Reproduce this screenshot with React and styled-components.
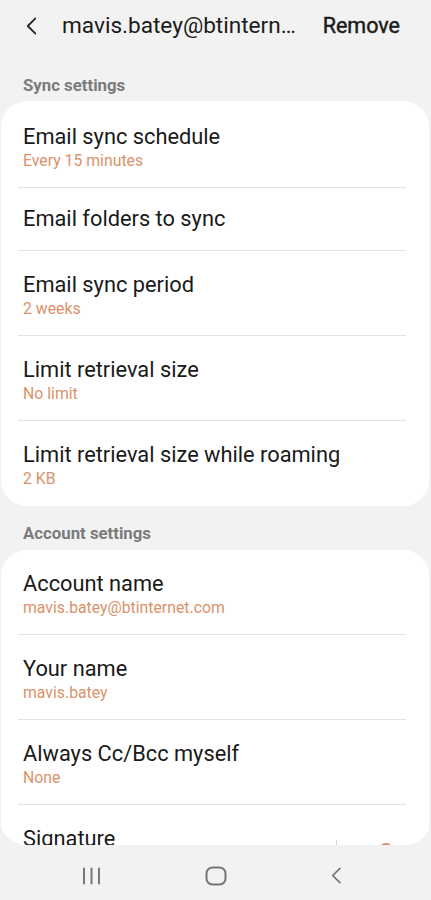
import React from "react";
import styled, { createGlobalStyle } from "styled-components";

const GlobalStyle = createGlobalStyle`
  html, body {
    margin: 0;
    padding: 0;
    background: #f2f2f2;
  }
  body {
    font-family: Roboto, "Noto Sans", "Liberation Sans", sans-serif;
    -webkit-font-smoothing: antialiased;
  }
  * { box-sizing: border-box; }
`;

const Screen = styled.div`
  width: 431px;
  height: 900px;
  display: flex;
  flex-direction: column;
  background: #f2f2f2;
  overflow: hidden;
`;

const Header = styled.header`
  height: 51px;
  flex: none;
  display: flex;
  align-items: center;
  padding: 0 31px 0 25px;
  color: #1b1b1b;
`;

const BackButton = styled.button`
  border: 0;
  background: none;
  padding: 0;
  width: 12px;
  height: 20px;
  display: flex;
  align-items: center;
  justify-content: center;
  color: #222;
  margin-right: 25px;
`;

const Title = styled.h1`
  flex: 1;
  margin: 0;
  font-size: 22.6px;
  font-weight: 400;
  line-height: 26px;
  white-space: nowrap;
  overflow: hidden;
`;

const Action = styled.span`
  font-size: 21.5px;
  font-weight: 400;
  line-height: 26px;
  color: #1b1b1b;
  -webkit-text-stroke: 0.45px #1b1b1b;
`;

const Scroller = styled.main`
  flex: 1;
  overflow: hidden;
  border-radius: 0 0 26px 26px;
`;

const SectionLabel = styled.div`
  padding: ${(p) => (p.$first ? "24px 23px 6px" : "17px 23px 7px")};
  font-size: 16.8px;
  line-height: 20px;
  font-weight: 700;
  color: #7b7b7b;
`;

const Card = styled.section`
  background: #fff;
  border-radius: 26px;
  margin: 0 2px 0 1px;
  padding-top: ${(p) => p.$padTop || 0}px;
  display: flex;
  flex-direction: column;
`;

const Row = styled.div`
  position: relative;
  display: flex;
  align-items: flex-start;
  height: ${(p) => (p.$sub ? "85px" : "63px")};
  padding: ${(p) => (p.$sub ? "21px 36px 0 22px" : "18px 36px 0 22px")};

  &:not(:last-child)::after {
    content: "";
    position: absolute;
    left: 17px;
    right: 23px;
    bottom: 0;
    height: 1px;
    background: #e3e3e3;
  }
`;

const TextBlock = styled.div`
  flex: 1;
  display: flex;
  flex-direction: column;
  min-width: 0;
`;

const RowTitle = styled.div`
  font-size: 21.8px;
  line-height: 26px;
  color: #1a1a1a;
  white-space: nowrap;
`;

const RowSub = styled.div`
  margin-top: 1px;
  font-size: 15.8px;
  line-height: 20px;
  color: #da926a;
  white-space: nowrap;
`;

const VDivider = styled.div`
  width: 1px;
  height: 40px;
  margin-top: 14px;
  background: #d6d6d6;
`;

const SwitchTrack = styled.div`
  position: relative;
  width: 34px;
  height: 18px;
  margin: 19px 0 0 22px;
  border-radius: 9px;
  background: #f1c3a5;
`;

const SwitchThumb = styled.div`
  position: absolute;
  right: -1px;
  top: -2px;
  width: 16px;
  height: 16px;
  border-radius: 50%;
  background: #fff;
  border: 2px solid #d98f64;
`;

const NavBar = styled.nav`
  height: 55px;
  flex: none;
  display: flex;
  align-items: center;
  justify-content: space-between;
  padding: 6px 90px 0 82px;
  color: #767676;
`;

const NavSlot = styled.div`
  display: flex;
  justify-content: center;
`;

const ChevronLeft = ({ size = 20, stroke = 2 }) => (
  <svg width={size * 0.6} height={size} viewBox="0 0 12 20" fill="none">
    <path
      d="M10.5 1.5 L2 10 L10.5 18.5"
      stroke="currentColor"
      strokeWidth={stroke}
      strokeLinecap="round"
      strokeLinejoin="round"
    />
  </svg>
);

const RecentsIcon = () => (
  <svg width="19" height="18" viewBox="0 0 19 18" fill="none">
    <path d="M2 1.5 V16.5 M9.5 1.5 V16.5 M17 1.5 V16.5" stroke="currentColor" strokeWidth="2" strokeLinecap="round" />
  </svg>
);

const HomeIcon = () => (
  <svg width="22" height="20" viewBox="0 0 22 20" fill="none">
    <rect x="1.5" y="1.5" width="19" height="17" rx="6" stroke="currentColor" strokeWidth="2" />
  </svg>
);

const syncRows = [
  { title: "Email sync schedule", sub: "Every 15 minutes" },
  { title: "Email folders to sync" },
  { title: "Email sync period", sub: "2 weeks" },
  { title: "Limit retrieval size", sub: "No limit" },
  { title: "Limit retrieval size while roaming", sub: "2 KB" },
];

const accountRows = [
  { title: "Account name", sub: "mavis.batey@btinternet.com" },
  { title: "Your name", sub: "mavis.batey" },
  { title: "Always Cc/Bcc myself", sub: "None" },
];

const SettingRow = ({ title, sub }) => (
  <Row $sub={!!sub}>
    <TextBlock>
      <RowTitle>{title}</RowTitle>
      {sub && <RowSub>{sub}</RowSub>}
    </TextBlock>
  </Row>
);

export default function App() {
  return (
    <>
      <GlobalStyle />
      <Screen>
        <Header>
          <BackButton aria-label="Back">
            <ChevronLeft size={18} stroke={2} />
          </BackButton>
          <Title>mavis.batey@btintern…</Title>
          <Action>Remove</Action>
        </Header>
        <Scroller>
          <SectionLabel $first>Sync settings</SectionLabel>
          <Card $padTop={2}>
            {syncRows.map((r) => (
              <SettingRow key={r.title} {...r} />
            ))}
          </Card>
          <SectionLabel>Account settings</SectionLabel>
          <Card>
            {accountRows.map((r) => (
              <SettingRow key={r.title} {...r} />
            ))}
            <Row $sub>
              <TextBlock>
                <RowTitle>Signature</RowTitle>
              </TextBlock>
              <VDivider />
              <SwitchTrack>
                <SwitchThumb />
              </SwitchTrack>
            </Row>
          </Card>
        </Scroller>
        <NavBar>
          <NavSlot>
            <RecentsIcon />
          </NavSlot>
          <NavSlot>
            <HomeIcon />
          </NavSlot>
          <NavSlot>
            <ChevronLeft size={17} stroke={2} />
          </NavSlot>
        </NavBar>
      </Screen>
    </>
  );
}
